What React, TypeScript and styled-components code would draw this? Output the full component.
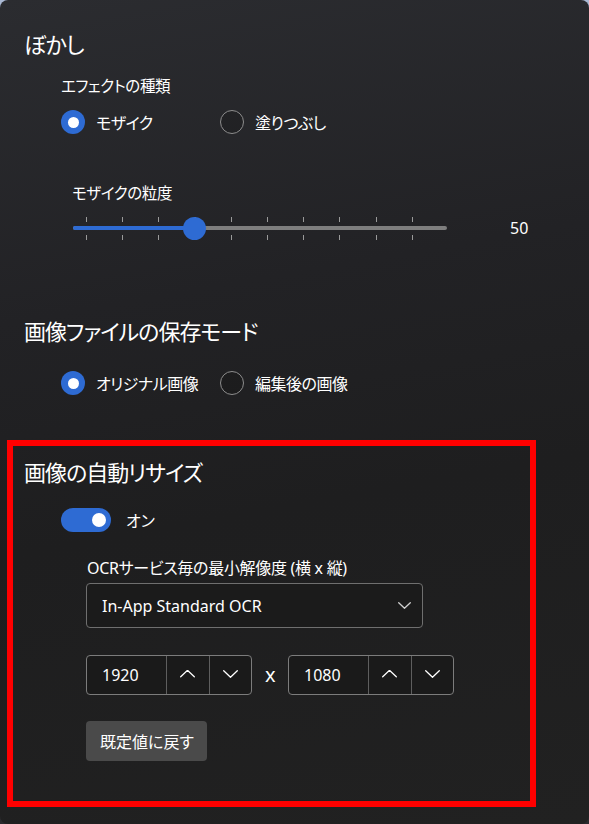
import React from 'react'
import styled, { createGlobalStyle } from 'styled-components'

const ACCENT = '#2e6bd3'

const GlobalStyle = createGlobalStyle`
  html, body {
    margin: 0;
    padding: 0;
  }
  body {
    background: linear-gradient(180deg, #aab9d4 0%, #56607a 25%, #2a2a2d 100%);
    font-family: 'Noto Sans', 'Noto Sans CJK JP', sans-serif;
    font-feature-settings: 'palt' 1;
    color: #ffffff;
  }
  * {
    box-sizing: border-box;
  }
`

export default function App(): JSX.Element {
  return (
    <>
      <GlobalStyle />
      <WindowSCP>
        <SectionSCP>
          <HeadingSCP>ぼかし</HeadingSCP>
          <FieldLabelSCP $top={18} $indent={37}>
            エフェクトの種類
          </FieldLabelSCP>
          <RadioGroupCP
            options={['モザイク', '塗りつぶし']}
            selected={0}
          />

          <FieldLabelSCP $top={49} $indent={48}>
            モザイクの粒度
          </FieldLabelSCP>
          <SliderCP value={50} thumbAt={121} />

          <HeadingSCP $top={73}>画像ファイルの保存モード</HeadingSCP>
          <RadioGroupCP
            options={['オリジナル画像', '編集後の画像']}
            selected={0}
            top={26}
          />
        </SectionSCP>

        <HighlightSCP>
          <HeadingSCP>画像の自動リサイズ</HeadingSCP>
          <ToggleRowSCP>
            <ToggleSCP $on />
            <span>オン</span>
          </ToggleRowSCP>

          <ResizeAreaSCP>
            <ResizeLabelSCP>OCRサービス毎の最小解像度 (横 x 縦)</ResizeLabelSCP>
            <DropdownSCP>
              <span>In-App Standard OCR</span>
              <Chevron dir={'down'} width={13} color={'#cfcfcf'} />
            </DropdownSCP>

            <SizeRowSCP>
              <NumberBoxCP value={'1920'} />
              <TimesSCP>x</TimesSCP>
              <NumberBoxCP value={'1080'} />
            </SizeRowSCP>

            <ResetButtonSCP>既定値に戻す</ResetButtonSCP>
          </ResizeAreaSCP>
        </HighlightSCP>
      </WindowSCP>
    </>
  )
}

function RadioGroupCP(props: {
  options: string[]
  selected: number
  top?: number
}): JSX.Element {
  return (
    <RadioGroupSCP $top={props.top ?? 14}>
      {props.options.map((opt, i) => (
        <RadioOptionSCP key={opt}>
          <RadioCircleSCP $checked={i === props.selected} />
          <span>{opt}</span>
        </RadioOptionSCP>
      ))}
    </RadioGroupSCP>
  )
}

function SliderCP(props: { value: number; thumbAt: number }): JSX.Element {
  const ticks = Array.from({ length: 10 }, (_, i) => 13 + i * 36.2)
  return (
    <SliderRowSCP>
      <SliderTrackSCP>
        {ticks.map(x => (
          <React.Fragment key={x}>
            <TickSCP style={{ left: x }} $top={5} />
            <TickSCP style={{ left: x }} $top={23} />
          </React.Fragment>
        ))}
        <RailSCP />
        <RailFillSCP style={{ width: props.thumbAt }} />
        <ThumbSCP style={{ left: props.thumbAt - 11.5 }} />
      </SliderTrackSCP>
      <SliderValueSCP>{props.value}</SliderValueSCP>
    </SliderRowSCP>
  )
}

function NumberBoxCP(props: { value: string }): JSX.Element {
  return (
    <NumberBoxSCP>
      <NumberFieldSCP>{props.value}</NumberFieldSCP>
      <SpinButtonSCP>
        <Chevron dir={'up'} width={15} color={'#ffffff'} />
      </SpinButtonSCP>
      <SpinButtonSCP>
        <Chevron dir={'down'} width={15} color={'#ffffff'} />
      </SpinButtonSCP>
    </NumberBoxSCP>
  )
}

function Chevron(props: {
  dir: 'up' | 'down'
  width: number
  color: string
}): JSX.Element {
  const h = props.width / 2
  const d =
    props.dir === 'down'
      ? `M0.7 0.7 L${props.width / 2} ${h - 0.3} L${props.width - 0.7} 0.7`
      : `M0.7 ${h - 0.7} L${props.width / 2} 0.3 L${props.width - 0.7} ${h - 0.7}`
  return (
    <svg width={props.width} height={h} viewBox={`0 0 ${props.width} ${h}`}>
      <path
        d={d}
        fill={'none'}
        stroke={props.color}
        strokeWidth={1.3}
        strokeLinecap={'round'}
        strokeLinejoin={'round'}
      />
    </svg>
  )
}

const WindowSCP = styled.div`
  width: 589px;
  height: 824px;
  border-radius: 8px;
  overflow: hidden;
  padding-top: 30px;
  background: linear-gradient(
    170deg,
    #2b2c30 0%,
    #222225 35%,
    #1e1e1f 60%,
    #212121 100%
  );
`

const SectionSCP = styled.div`
  padding-left: 24px;
`

const HeadingSCP = styled.h2<{ $top?: number }>`
  margin: ${p => p.$top ?? 0}px 0 0 0;
  font-size: 22px;
  line-height: 28px;
  font-weight: 400;
  letter-spacing: -1px;
`

const FieldLabelSCP = styled.div<{ $top: number; $indent: number }>`
  margin: ${p => p.$top}px 0 0 ${p => p.$indent}px;
  font-size: 15.5px;
  line-height: 20px;
  letter-spacing: -0.4px;
`

const RadioGroupSCP = styled.div<{ $top: number }>`
  display: grid;
  grid-template-columns: 159px auto;
  align-items: center;
  height: 24px;
  margin: ${p => p.$top}px 0 0 37px;
`

const RadioOptionSCP = styled.label`
  display: flex;
  align-items: center;
  gap: 11px;
  font-size: 16px;
  letter-spacing: -0.5px;
`

const RadioCircleSCP = styled.span<{ $checked?: boolean }>`
  flex: none;
  width: 24px;
  height: 24px;
  border-radius: 50%;
  display: flex;
  align-items: center;
  justify-content: center;
  background: ${p => (p.$checked ? ACCENT : 'rgba(0, 0, 0, 0.12)')};
  border: ${p => (p.$checked ? 'none' : '1.5px solid #8d8d8d')};

  &::after {
    content: '';
    display: ${p => (p.$checked ? 'block' : 'none')};
    width: 11px;
    height: 11px;
    border-radius: 50%;
    background: #ffffff;
  }
`

const SliderRowSCP = styled.div`
  display: flex;
  align-items: center;
  height: 32px;
  margin: 9px 0 0 49px;
`

const SliderTrackSCP = styled.div`
  position: relative;
  width: 374px;
  height: 32px;
`

const TickSCP = styled.span<{ $top: number }>`
  position: absolute;
  top: ${p => p.$top}px;
  width: 1px;
  height: 5px;
  background: #9a9a9a;
`

const RailSCP = styled.div`
  position: absolute;
  left: 0;
  right: 0;
  top: 14px;
  height: 4px;
  border-radius: 2px;
  background: #7e7e7e;
`

const RailFillSCP = styled.div`
  position: absolute;
  left: 0;
  top: 14px;
  height: 4px;
  border-radius: 2px;
  background: ${ACCENT};
`

const ThumbSCP = styled.div`
  position: absolute;
  top: 4.5px;
  width: 23px;
  height: 23px;
  border-radius: 50%;
  background: ${ACCENT};
`

const SliderValueSCP = styled.span`
  margin-left: 63px;
  font-size: 16px;
`

const HighlightSCP = styled.div`
  width: 529px;
  margin: 45px 0 0 7px;
  border: 6px solid #ff0000;
  padding: 12px 0 40px 11px;
`

const ToggleRowSCP = styled.div`
  display: flex;
  align-items: center;
  gap: 15px;
  height: 24px;
  margin: 22px 0 0 37px;
  font-size: 16px;
`

const ToggleSCP = styled.span<{ $on?: boolean }>`
  position: relative;
  width: 50px;
  height: 24px;
  border-radius: 12px;
  background: ${p => (p.$on ? ACCENT : 'transparent')};

  &::after {
    content: '';
    position: absolute;
    top: 5px;
    left: ${p => (p.$on ? 31 : 5)}px;
    width: 14px;
    height: 14px;
    border-radius: 50%;
    background: #ffffff;
  }
`

const ResizeAreaSCP = styled.div`
  margin-left: 62px;
`

const ResizeLabelSCP = styled.div`
  margin: 26px 0 0 1px;
  font-size: 16px;
  line-height: 20px;
  letter-spacing: -0.3px;
`

const DropdownSCP = styled.div`
  display: flex;
  align-items: center;
  justify-content: space-between;
  width: 337px;
  height: 45px;
  margin-top: 5px;
  padding: 0 11px 0 15px;
  border: 1px solid #6f6f6f;
  border-radius: 4px;
  background: #1b1b1b;
  font-size: 16px;
`

const SizeRowSCP = styled.div`
  display: flex;
  align-items: center;
  gap: 13px;
  margin-top: 27px;
`

const NumberBoxSCP = styled.div`
  display: flex;
  width: 166px;
  height: 40px;
  border: 1px solid #7c7c7c;
  border-radius: 4px;
  background: #1a1a1a;
  overflow: hidden;
`

const NumberFieldSCP = styled.div`
  width: 79px;
  padding-left: 15px;
  display: flex;
  align-items: center;
  font-size: 16px;
`

const SpinButtonSCP = styled.div`
  flex: 1;
  display: flex;
  align-items: center;
  justify-content: center;
  border-left: 1px solid #5e5e5e;
  padding-bottom: 2px;
`

const TimesSCP = styled.span`
  width: 10px;
  font-size: 20px;
  line-height: 20px;
  text-align: center;
`

const ResetButtonSCP = styled.button`
  display: block;
  height: 40px;
  margin-top: 26px;
  padding: 0 13px 0 14px;
  border: none;
  border-radius: 4px;
  background: #4a4a4a;
  color: #ffffff;
  font-family: 'Noto Sans', 'Noto Sans CJK JP', sans-serif;
  font-feature-settings: 'palt' 1;
  font-size: 16px;
`
